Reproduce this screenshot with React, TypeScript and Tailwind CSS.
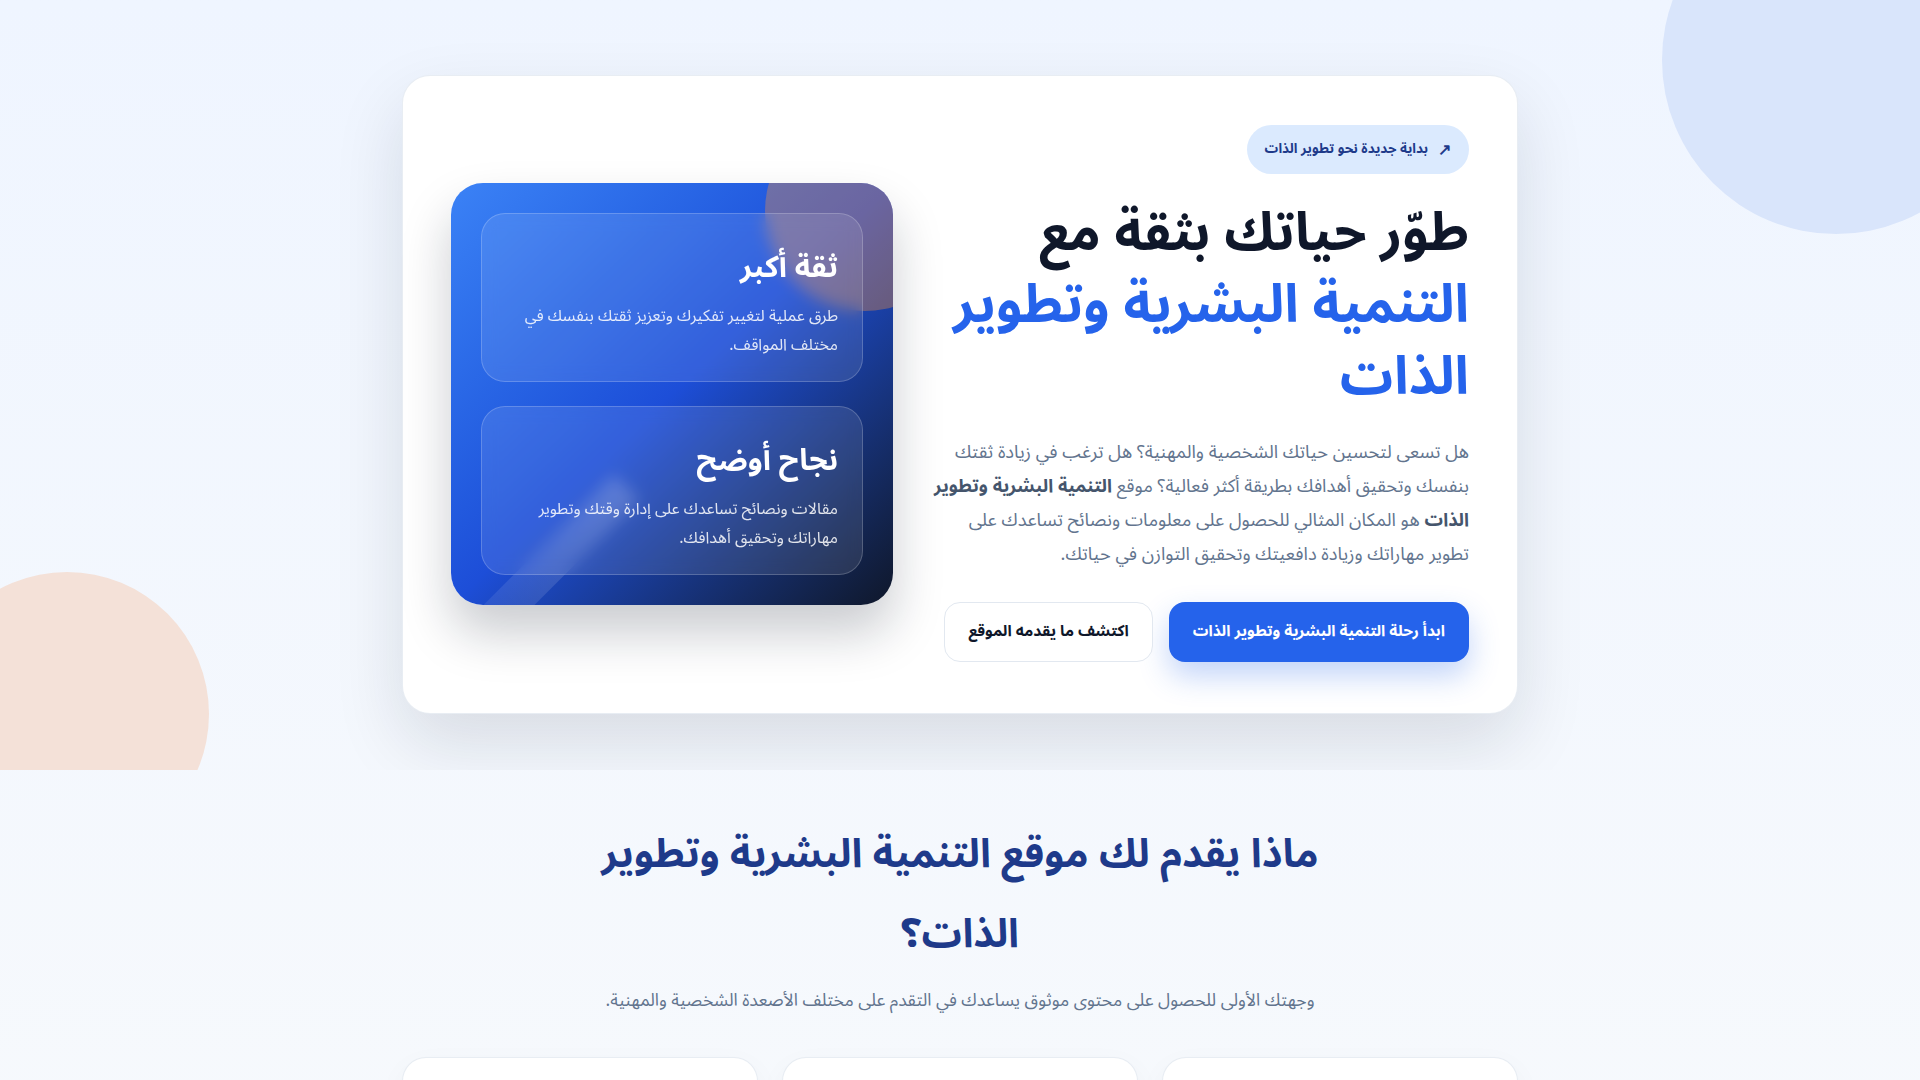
const FEATURE_CARDS = [
  {
    title: 'ثقة أكبر',
    text: 'طرق عملية لتغيير تفكيرك وتعزيز ثقتك بنفسك في مختلف المواقف.',
  },
  {
    title: 'نجاح أوضح',
    text: 'مقالات ونصائح تساعدك على إدارة وقتك وتطوير مهاراتك وتحقيق أهدافك.',
  },
];

const OFFER_CARDS = [
  { title: 'تطوير الذات', text: 'خطوات بسيطة لبناء عادات إيجابية.' },
  { title: 'الثقة بالنفس', text: 'تمارين تساعدك على تجاوز التردد.' },
  { title: 'إدارة الوقت', text: 'أدوات لتنظيم يومك بفعالية.' },
];

function HeroPanel() {
  return (
    <div className="relative overflow-hidden rounded-[32px] bg-gradient-to-br from-[#3b82f6] via-[#1d4ed8] to-[#0f172a] p-[30px] shadow-[0_28px_50px_rgba(15,23,42,0.22)]">
      <div className="pointer-events-none absolute -right-[72px] -top-[72px] h-[200px] w-[200px] rounded-full bg-[#fb923c]/35" />
      <div className="pointer-events-none absolute bottom-[-70px] left-[80px] h-[220px] w-[36px] rotate-45 bg-gradient-to-t from-white/5 to-white/20" />

      <div className="relative flex flex-col gap-6">
        {FEATURE_CARDS.map((card) => (
          <div
            key={card.title}
            className="rounded-[24px] border border-white/20 bg-white/10 px-6 pb-[21px] pt-[32px] text-white backdrop-blur-sm"
          >
            <h3 className="text-[30px] font-bold leading-[44px]">{card.title}</h3>
            <p className="mt-[12px] text-base leading-[29px] text-white/85">{card.text}</p>
          </div>
        ))}
      </div>
    </div>
  );
}

export default function App() {
  return (
    <div
      dir="rtl"
      className="min-h-screen bg-gradient-to-b from-[#eff5ff] to-[#f8fafc] text-slate-900"
      style={{ fontFamily: '"Noto Sans Arabic", "Noto Sans", sans-serif' }}
    >
      <section className="relative overflow-hidden pb-[56px] pt-[75px]">
        <div className="pointer-events-none absolute -right-[90px] -top-[114px] h-[348px] w-[348px] rounded-full bg-[#d9e5fb]" />
        <div className="pointer-events-none absolute -left-[75px] bottom-[-86px] h-[284px] w-[284px] rounded-full bg-[#f4e1d8]" />

        <div className="relative mx-auto max-w-[1116px] rounded-[28px] border border-slate-200/80 bg-white px-12 pb-[51px] pt-[49px] shadow-[0_30px_70px_rgba(15,23,42,0.12)]">
          <div className="grid grid-cols-[1fr_442px] items-center gap-[38px]">
            <div>
              <span className="inline-flex h-[49px] items-center gap-[10px] rounded-full bg-[#dbeafe] px-[18px] text-[13.5px] font-bold text-[#1e3a8a]">
                <span className="text-[16px]">↗</span>
                بداية جديدة نحو تطوير الذات
              </span>

              <h1 className="mt-[23px] text-[53px] font-bold leading-[72px] text-[#0f172a]">
                طوّر حياتك بثقة مع
                <br />
                <span className="text-[#2563eb]">التنمية البشرية وتطوير الذات</span>
              </h1>

              <p className="mt-[22px] text-[18.3px] leading-[34px] text-slate-500">
                هل تسعى لتحسين حياتك الشخصية والمهنية؟ هل ترغب في زيادة ثقتك بنفسك وتحقيق أهدافك بطريقة أكثر
                فعالية؟ موقع <strong className="font-bold text-slate-600">التنمية البشرية وتطوير الذات</strong> هو
                المكان المثالي للحصول على معلومات ونصائح تساعدك على تطوير مهاراتك وزيادة دافعيتك وتحقيق التوازن في
                حياتك.
              </p>

              <div className="mt-[31px] flex items-center gap-4">
                <button
                  type="button"
                  className="h-[60px] whitespace-nowrap rounded-2xl bg-[#2563eb] px-6 text-[15.5px] font-bold text-white shadow-[0_14px_30px_rgba(37,99,235,0.28)]"
                >
                  ابدأ رحلة التنمية البشرية وتطوير الذات
                </button>
                <button
                  type="button"
                  className="h-[60px] whitespace-nowrap rounded-2xl border border-slate-200 bg-white px-[23px] text-[15.5px] font-bold text-[#0f172a]"
                >
                  اكتشف ما يقدمه الموقع
                </button>
              </div>
            </div>

            <HeroPanel />
          </div>
        </div>
      </section>

      <section className="px-6 pb-20 pt-[45px]">
        <h2 className="mx-auto max-w-[740px] text-center text-[40px] font-bold leading-[80px] text-[#1e3a8a]">
          ماذا يقدم لك موقع التنمية البشرية وتطوير الذات؟
        </h2>
        <p className="mt-[12px] text-center text-[17.5px] leading-7 text-slate-500">
          وجهتك الأولى للحصول على محتوى موثوق يساعدك في التقدم على مختلف الأصعدة الشخصية والمهنية.
        </p>

        <div className="mx-auto mt-[42px] grid max-w-[1116px] grid-cols-3 gap-6">
          {OFFER_CARDS.map((card) => (
            <article
              key={card.title}
              className="rounded-[24px] border border-slate-200/80 bg-white p-8 shadow-[0_10px_30px_rgba(15,23,42,0.04)]"
            >
              <div className="h-14 w-14 rounded-2xl bg-[#dbeafe]" />
              <h3 className="mt-6 text-2xl font-bold text-[#1e3a8a]">{card.title}</h3>
              <p className="mt-3 text-base leading-7 text-slate-500">{card.text}</p>
            </article>
          ))}
        </div>
      </section>
    </div>
  );
}
